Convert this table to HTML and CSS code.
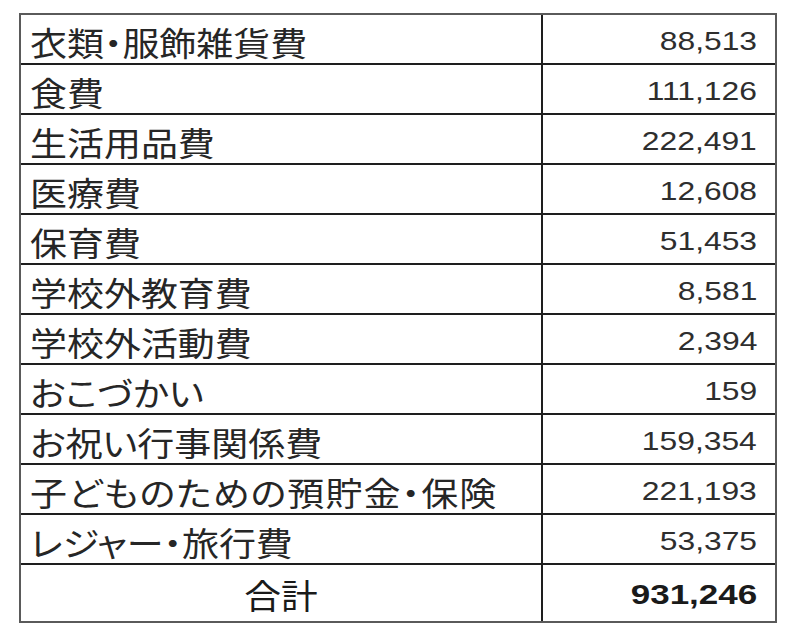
FILE: index.html
```html
<!DOCTYPE html>
<html lang="ja">
<head>
<meta charset="utf-8">
<title>子どもにかかる費用</title>
<link rel="stylesheet" href="styles.css">
</head>
<body>
<div class="sheet">
  <div class="cell label first"><span class="jp">衣類・服飾雑貨費</span></div>
  <div class="cell value first"><span class="num">88,513</span></div>
  <div class="cell label"><span class="jp">食費</span></div>
  <div class="cell value"><span class="num">111,126</span></div>
  <div class="cell label"><span class="jp">生活用品費</span></div>
  <div class="cell value"><span class="num">222,491</span></div>
  <div class="cell label"><span class="jp">医療費</span></div>
  <div class="cell value"><span class="num">12,608</span></div>
  <div class="cell label"><span class="jp">保育費</span></div>
  <div class="cell value"><span class="num">51,453</span></div>
  <div class="cell label"><span class="jp">学校外教育費</span></div>
  <div class="cell value"><span class="num">8,581</span></div>
  <div class="cell label"><span class="jp">学校外活動費</span></div>
  <div class="cell value"><span class="num">2,394</span></div>
  <div class="cell label"><span class="jp">おこづかい</span></div>
  <div class="cell value"><span class="num">159</span></div>
  <div class="cell label"><span class="jp">お祝い行事関係費</span></div>
  <div class="cell value"><span class="num">159,354</span></div>
  <div class="cell label"><span class="jp wide">子どものための預貯金・保険</span></div>
  <div class="cell value"><span class="num">221,193</span></div>
  <div class="cell label"><span class="jp">レジャー・旅行費</span></div>
  <div class="cell value"><span class="num">53,375</span></div>
  <div class="cell label total"><span class="jp">合計</span></div>
  <div class="cell value total"><span class="num">931,246</span></div>
</div>
</body>
</html>
```
FILE: styles.css
```css
* { box-sizing: border-box; }
html, body { margin: 0; padding: 0; background: #ffffff; }

.sheet {
  margin: 13px 0 0 19px;
  width: 758px;
  border: 2px solid #5a5a5a;
  display: grid;
  grid-template-columns: 520px 1fr;
  grid-template-rows: 48px repeat(10, 50px) 58px;
}

.cell {
  display: flex;
  align-items: center;
  border-top: 2px solid #1e1e1e;
  padding-top: 6px;
}
.cell.first { border-top: none; }

.label {
  padding-left: 9px;
}
.value {
  border-left: 2px solid #1e1e1e;
  justify-content: flex-end;
  padding-right: 18px;
}

.jp {
  display: inline-block;
  font-family: "Noto Sans CJK JP", "Noto Sans", sans-serif;
  font-size: 33px;
  line-height: 1.1;
  color: #262626;
  font-feature-settings: "palt";
  transform: scaleX(1.12);
  transform-origin: left center;
  white-space: nowrap;
}
.jp.wide { letter-spacing: 1px; }

.num {
  display: inline-block;
  font-family: "Liberation Sans", Arial, sans-serif;
  font-size: 26.5px;
  line-height: 1.1;
  color: #2e2e2e;
  transform: scaleX(1.2);
  transform-origin: right center;
  white-space: nowrap;
}

.label.total {
  justify-content: center;
  padding-left: 0;
  padding-top: 4px;
}
.label.total .jp {
  font-size: 34px;
  color: #1a1a1a;
  transform: scaleX(1.08);
  transform-origin: center center;
}
.value.total { padding-top: 4px; }
.value.total .num {
  font-weight: bold;
  font-size: 28px;
  color: #1a1a1a;
  transform: scaleX(1.25);
}
```
